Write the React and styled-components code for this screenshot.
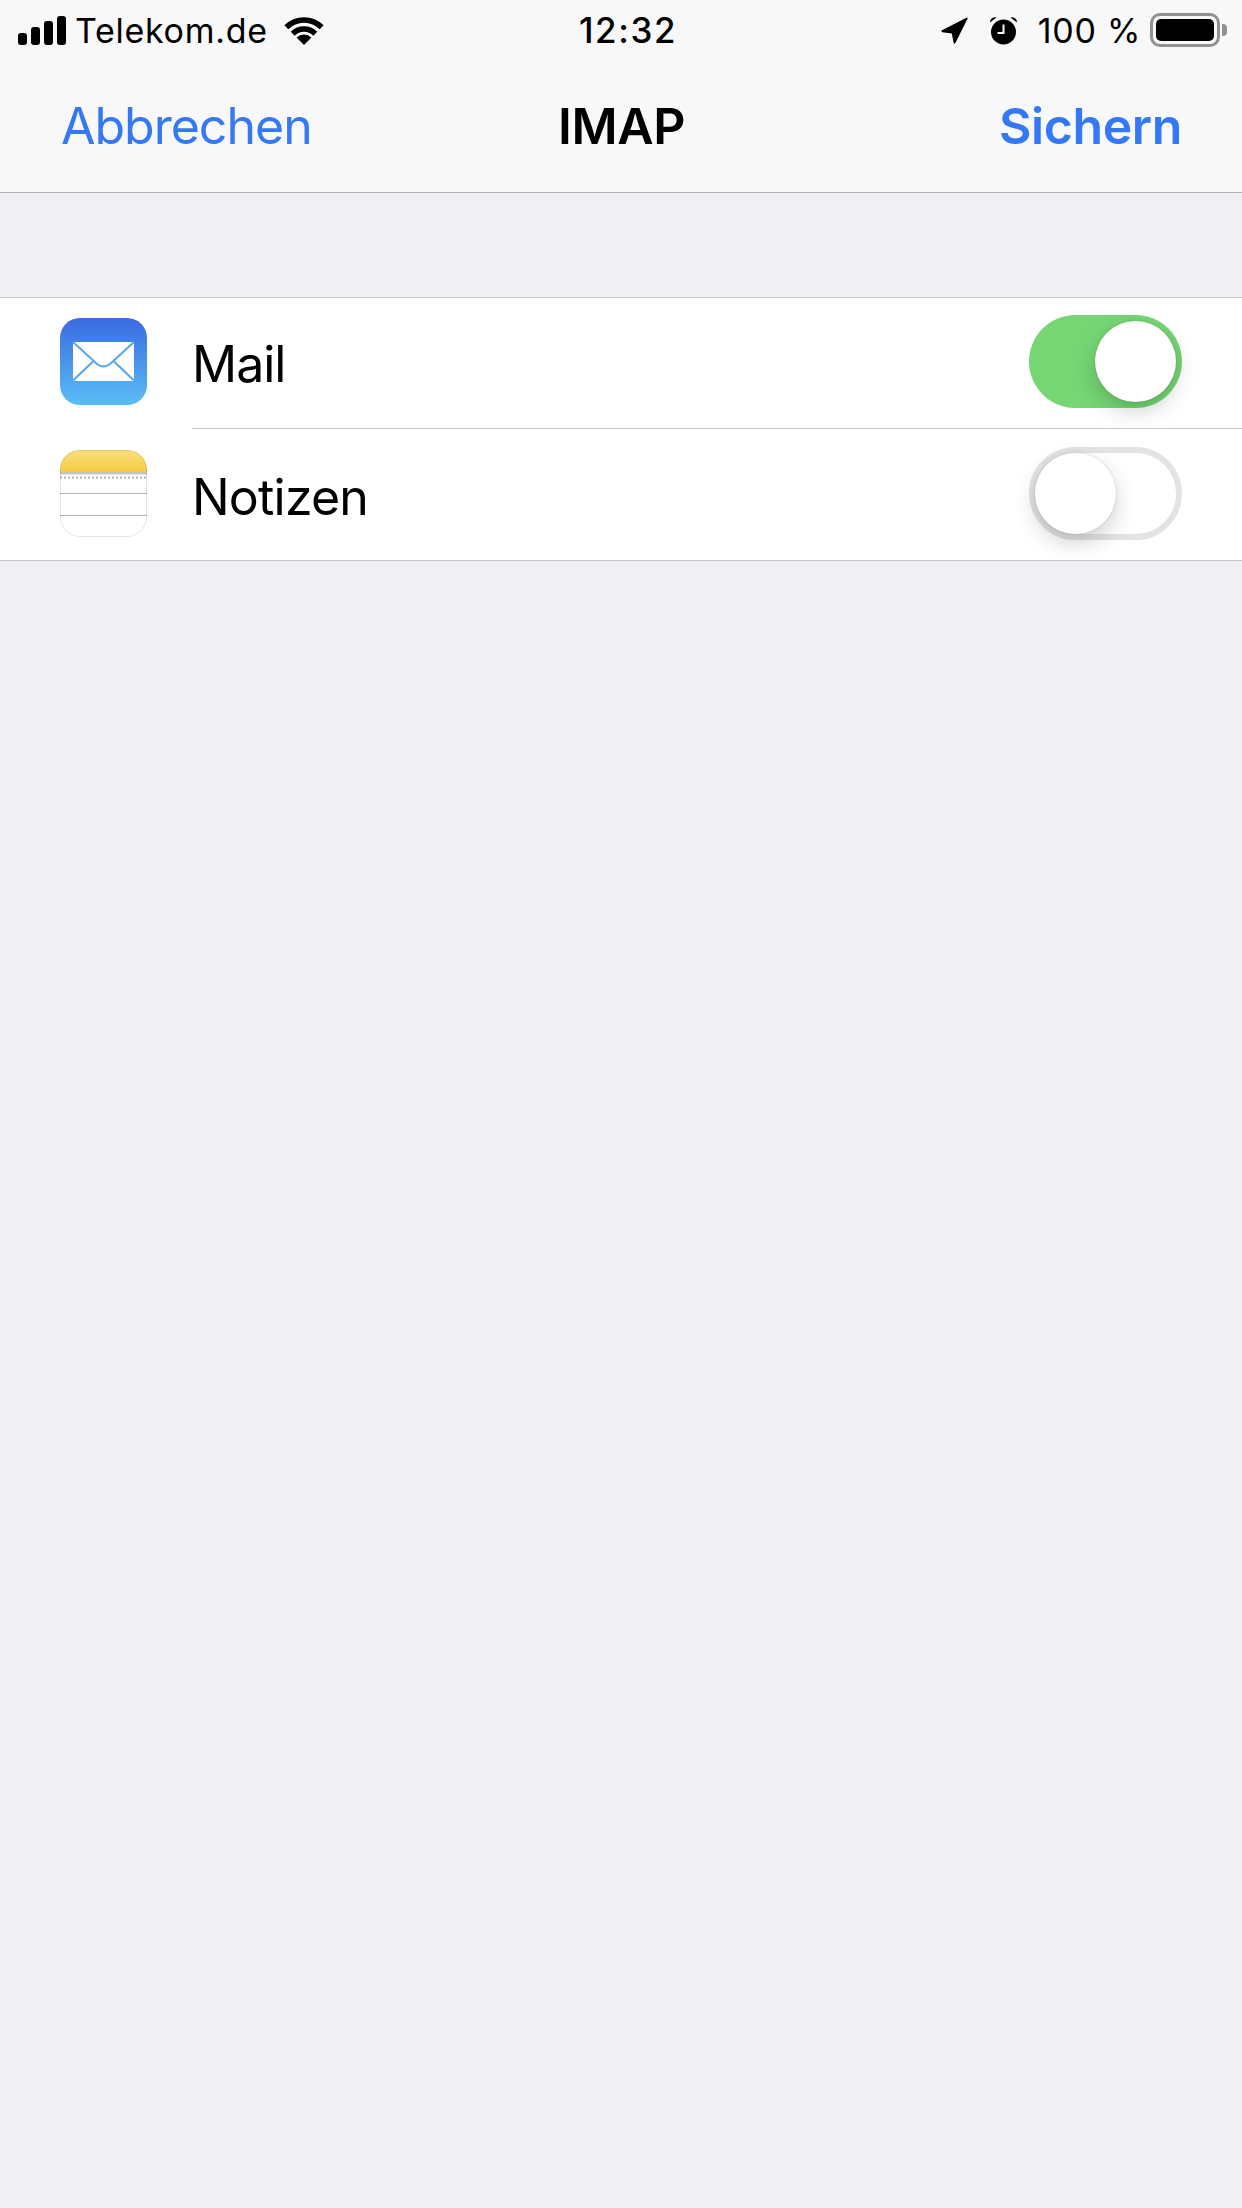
import styled, { createGlobalStyle } from "styled-components";

const GlobalStyle = createGlobalStyle`
  html, body {
    margin: 0;
    padding: 0;
    background: #efeff4;
  }
  body {
    font-family: "Inter", "Liberation Sans", sans-serif;
    color: #000;
  }
`;

const Page = styled.div`
  width: 1242px;
  height: 2208px;
  overflow: hidden;
  background: #efeff4;
`;

const Header = styled.header`
  height: 192px;
  background: #f8f8f8;
  border-bottom: 1px solid #b0b0b3;
`;

const StatusBar = styled.div`
  height: 60px;
  padding: 0 15px 0 18px;
  display: grid;
  grid-template-columns: 1fr auto 1fr;
  align-items: center;
  font-size: 34px;
`;

const StatusLeft = styled.div`
  display: flex;
  align-items: center;
`;

const StatusRight = styled.div`
  display: flex;
  align-items: center;
  justify-content: flex-end;
`;

const Carrier = styled.span`
  margin: 0 15px 0 9px;
  letter-spacing: 0.7px;
`;

const Time = styled.span`
  font-weight: 500;
  font-size: 35px;
  letter-spacing: 1.6px;
  margin-left: 11px;
`;

const Signal = styled.div`
  display: flex;
  align-items: flex-end;
  gap: 4px;
  height: 29px;
`;

const SignalBar = styled.i`
  display: block;
  width: 9px;
  height: ${(p) => p.$h}px;
  background: #000;
  border-radius: 3px;
`;

const Percent = styled.span`
  margin: 0 9px 0 20px;
  letter-spacing: 0.7px;
`;

const Battery = styled.div`
  width: 70px;
  height: 34px;
  box-sizing: border-box;
  border: 3px solid #919191;
  border-radius: 10px;
  padding: 3px;
  display: flex;
`;

const BatteryFill = styled.div`
  flex: 1;
  background: #000;
  border-radius: 5px;
`;

const BatteryNub = styled.div`
  width: 5px;
  height: 12px;
  margin-left: 2px;
  background: #919191;
  border-radius: 0 4px 4px 0;
`;

const NavBar = styled.nav`
  height: 132px;
  padding: 0 60px 0 61px;
  display: grid;
  grid-template-columns: 1fr auto 1fr;
  align-items: center;
  font-size: 50px;
  box-sizing: border-box;
`;

const NavButton = styled.span`
  color: #3478f6;
  font-weight: ${(p) => (p.$bold ? 600 : 400)};
  letter-spacing: ${(p) => (p.$bold ? "-0.4px" : "-1px")};
  text-align: ${(p) => (p.$bold ? "right" : "left")};
`;

const NavTitle = styled.span`
  font-weight: 600;
  letter-spacing: -0.4px;
`;

const List = styled.section`
  margin-top: 104px;
  background: #fff;
  border-top: 1px solid #c8c7cc;
  border-bottom: 1px solid #c8c7cc;
`;

const Row = styled.div`
  display: flex;
  align-items: stretch;
  padding-left: 60px;
  height: 131px;
`;

const AppIcon = styled.svg`
  width: 87px;
  height: 87px;
  flex: none;
  align-self: center;
  margin-bottom: ${(p) => p.$lift}px;
`;

const RowBody = styled.div`
  flex: 1;
  margin-left: 45px;
  padding: 0 60px 0 0;
  display: flex;
  align-items: center;
  justify-content: space-between;
  border-bottom: ${(p) => (p.$divider ? "1px solid #c8c7cc" : "none")};
`;

const Label = styled.span`
  font-size: 50px;
  letter-spacing: ${(p) => p.$spacing}px;
  margin-top: ${(p) => p.$drop}px;
`;

const Switch = styled.div`
  width: 153px;
  height: 93px;
  box-sizing: border-box;
  border-radius: 47px;
  display: flex;
  justify-content: ${(p) => (p.$on ? "flex-end" : "flex-start")};
  background: ${(p) => (p.$on ? "#75d673" : "#fff")};
  border: ${(p) => (p.$on ? "none" : "6px solid #e3e3e3")};
  padding: ${(p) => (p.$on ? "6px" : "0")};
  margin-bottom: ${(p) => p.$lift}px;
`;

const Knob = styled.div`
  width: 81px;
  height: 81px;
  border-radius: 50%;
  background: #fff;
  box-shadow: 0 9px 22px rgba(0, 0, 0, 0.18), 0 0 3px rgba(0, 0, 0, 0.14);
`;

function WifiIcon() {
  return (
    <svg width="42" height="30" viewBox="0 0 42 30">
      <path d="M21 30 L13.6 22.6 A10.5 10.5 0 0 1 28.4 22.6 Z" fill="#000" />
      <path d="M9.7 18.7 A16 16 0 0 1 32.3 18.7" fill="none" stroke="#000" strokeWidth="5.5" />
      <path d="M3.3 12.3 A25 25 0 0 1 38.7 12.3" fill="none" stroke="#000" strokeWidth="5.5" />
    </svg>
  );
}

function LocationIcon() {
  return (
    <svg width="27" height="27" viewBox="0 0 27 27">
      <path d="M1 13.2 L25.4 .8 Q27.2 0 26.4 1.9 L14.4 26 Q13.2 27.6 12.6 25.8 L10.8 16.6 L1.5 15.2 Q-.3 14 1 13.2 Z" fill="#000" />
    </svg>
  );
}

function AlarmIcon() {
  return (
    <svg width="29" height="29" viewBox="0 0 29 29" style={{ marginLeft: 21 }}>
      <circle cx="14.5" cy="16" r="12.5" fill="#000" />
      <path d="M1 6.5 A5 5 0 0 1 7.5 1.5 Z M28 6.5 A5 5 0 0 0 21.5 1.5 Z" fill="#000" />
      <path d="M14.5 8.5 V17 H8.5" fill="none" stroke="#f8f8f8" strokeWidth="2" />
    </svg>
  );
}

function MailIcon() {
  return (
    <AppIcon $lift={4} viewBox="0 0 87 87">
      <defs>
        <linearGradient id="mailBg" x1="0" y1="0" x2="0" y2="1">
          <stop offset="0" stopColor="#3a6ae2" />
          <stop offset="1" stopColor="#5abdf6" />
        </linearGradient>
      </defs>
      <rect width="87" height="87" rx="20" fill="url(#mailBg)" />
      <rect x="13" y="24" width="61" height="39" fill="#fff" />
      <path d="M13 24 L37 46 Q43.5 51 50 46 L74 24" fill="none" stroke="#55a6f0" strokeWidth="2" />
      <path d="M13 62.5 L33 43.5 M74 62.5 L54 43.5" fill="none" stroke="#55a6f0" strokeWidth="2" />
    </AppIcon>
  );
}

function NotesIcon() {
  return (
    <AppIcon $lift={2} viewBox="0 0 87 87">
      <defs>
        <linearGradient id="notesBg" x1="0" y1="0" x2="0" y2="1">
          <stop offset="0" stopColor="#fbe07e" />
          <stop offset="1" stopColor="#f6cb43" />
        </linearGradient>
        <clipPath id="notesClip">
          <rect width="87" height="87" rx="20" />
        </clipPath>
      </defs>
      <g clipPath="url(#notesClip)">
        <rect width="87" height="87" fill="#fff" />
        <rect width="87" height="22" fill="url(#notesBg)" />
        <rect y="22" width="87" height="2.5" fill="#c4c4c4" />
        <path d="M0 27.5 H87" stroke="#b0b0b0" strokeWidth="2" strokeDasharray="2 2" />
        <path d="M0 43.5 H87 M0 65.5 H87" stroke="#b4b4b4" strokeWidth="1" />
      </g>
      <rect x=".5" y=".5" width="86" height="86" rx="19.5" fill="none" stroke="#000" strokeOpacity=".1" />
    </AppIcon>
  );
}

export default function App() {
  return (
    <Page>
      <GlobalStyle />
      <Header>
        <StatusBar>
          <StatusLeft>
            <Signal>
              <SignalBar $h={12} />
              <SignalBar $h={18} />
              <SignalBar $h={24} />
              <SignalBar $h={29} />
            </Signal>
            <Carrier>Telekom.de</Carrier>
            <WifiIcon />
          </StatusLeft>
          <Time>12:32</Time>
          <StatusRight>
            <LocationIcon />
            <AlarmIcon />
            <Percent>100 %</Percent>
            <Battery>
              <BatteryFill />
            </Battery>
            <BatteryNub />
          </StatusRight>
        </StatusBar>
        <NavBar>
          <NavButton>Abbrechen</NavButton>
          <NavTitle>IMAP</NavTitle>
          <NavButton $bold>Sichern</NavButton>
        </NavBar>
      </Header>
      <List>
        <Row>
          <MailIcon />
          <RowBody $divider>
            <Label $spacing={-1} $drop={1}>Mail</Label>
            <Switch $on $lift={3}>
              <Knob />
            </Switch>
          </RowBody>
        </Row>
        <Row>
          <NotesIcon />
          <RowBody>
            <Label $spacing={-0.8} $drop={4}>Notizen</Label>
            <Switch $lift={2}>
              <Knob />
            </Switch>
          </RowBody>
        </Row>
      </List>
    </Page>
  );
}
